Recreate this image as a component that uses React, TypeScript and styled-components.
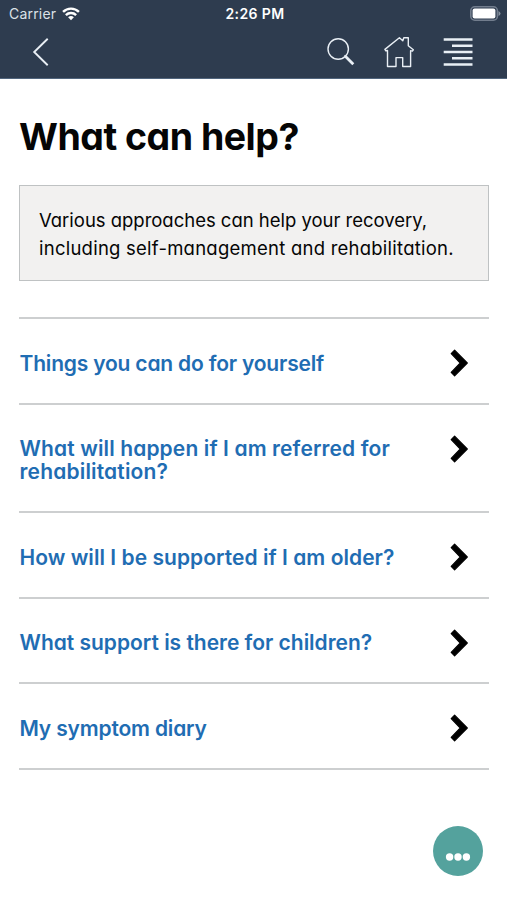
import React from "react";
import styled, { createGlobalStyle } from "styled-components";

const GlobalStyle = createGlobalStyle`
  * { box-sizing: border-box; }
  body { margin: 0; background: #fff; font-family: Inter, "Open Sans", sans-serif; }
  h1, p, ul { margin: 0; padding: 0; }
`;

const Screen = styled.div`
  display: flex;
  flex-direction: column;
  height: 900px;
  overflow: hidden;
  background: #fff;
  color: #050505;
  font-feature-settings: "cv11" 1;
`;

const Header = styled.header`
  height: 79px;
  flex: none;
  background: #2e3c4f;
  border-bottom: 1px solid #51657d;
  color: #fff;
`;

const StatusBar = styled.div`
  display: grid;
  grid-template-columns: 1fr auto 1fr;
  align-items: center;
  height: 27px;
  padding: 0 6px 0 9px;
  font-feature-settings: normal;
`;

const Carrier = styled.div`
  display: flex;
  align-items: center;
  gap: 6px;
  font-size: 14px;
  letter-spacing: 0.2px;
  color: #dbe1e7;
`;

const Clock = styled.div`
  font-size: 14px;
  font-weight: 600;
  letter-spacing: 0.4px;
`;

const BatterySlot = styled.div`
  display: flex;
  justify-content: flex-end;
`;

const NavBar = styled.nav`
  display: flex;
  align-items: center;
  justify-content: space-between;
  height: 50px;
  padding: 0 34px 0 32px;
`;

const NavActions = styled.div`
  display: flex;
  align-items: center;
  gap: 29px;
`;

const IconButton = styled.button`
  display: flex;
  padding: 0;
  border: 0;
  background: none;
  color: #e9eff5;
`;

const Main = styled.main`
  flex: 1;
  padding: 35px 18px 0 19px;
`;

const Title = styled.h1<{ $tracking: number }>`
  height: 71px;
  padding-top: 1px;
  font-size: 37.5px;
  line-height: 44px;
  font-weight: 700;
  white-space: nowrap;
  letter-spacing: ${(p) => p.$tracking}px;
`;

const Summary = styled.p`
  height: 96px;
  padding: 20px 18px 0 19px;
  border: 1px solid #bfc2c3;
  background: #f2f1f0;
  font-size: 18.5px;
  line-height: 28px;
`;

const Line = styled.span<{ $tracking: number }>`
  display: block;
  white-space: nowrap;
  letter-spacing: ${(p) => p.$tracking}px;
`;

const TopicList = styled.ul`
  margin-top: 36px;
  list-style: none;
  border-top: 2px solid #cdcfd0;
`;

const Topic = styled.li<{ $height: number }>`
  display: flex;
  justify-content: space-between;
  height: ${(p) => p.$height}px;
  padding: 30px 20.5px 0 0.5px;
  border-bottom: 2px solid #cdcfd0;
`;

const TopicLink = styled.a`
  padding-top: 2.5px;
  color: #1f6db3;
  font-size: 21px;
  font-weight: 600;
  line-height: 23px;
`;

const Fab = styled.button`
  position: absolute;
  left: 433px;
  top: 826px;
  display: flex;
  align-items: center;
  justify-content: center;
  width: 50px;
  height: 50px;
  padding: 11px 0 0;
  border: 0;
  border-radius: 50%;
  background: #54a29d;
`;

const topics = [
  { height: 85.6, lines: [{ text: "Things you can do for yourself", tracking: -0.19 }] },
  {
    height: 108.6,
    lines: [
      { text: "What will happen if I am referred for", tracking: 0.12 },
      { text: "rehabilitation?", tracking: 0.17 },
    ],
  },
  { height: 85.6, lines: [{ text: "How will I be supported if I am older?", tracking: 0.04 }] },
  { height: 85.6, lines: [{ text: "What support is there for children?", tracking: -0.02 }] },
  { height: 85.6, lines: [{ text: "My symptom diary", tracking: -0.17 }] },
];

const Wifi = () => (
  <svg width="18" height="14" viewBox="0 0 19 15" fill="none" stroke="#fff" strokeWidth="2.6">
    <path d="M1 5.2a12.2 12.2 0 0 1 17 0M4 8.6a7.9 7.9 0 0 1 11 0" />
    <path d="M6.4 11.1a4.5 4.5 0 0 1 6.2 0L9.5 14.2z" fill="#fff" stroke="none" />
  </svg>
);

const Battery = () => (
  <svg width="31" height="15" viewBox="0 0 31 15">
    <rect x=".8" y=".8" width="26.6" height="13.4" rx="4" fill="none" stroke="#727d8d" strokeWidth="1.6" />
    <rect x="2.6" y="2.6" width="22.8" height="9.8" rx="2" fill="#fff" />
    <path d="M28.5 5q2 1 2 2.5t-2 2.5z" fill="#8792a0" />
  </svg>
);

const Back = () => (
  <svg width="18" height="30" viewBox="0 0 18 30" fill="none" stroke="currentColor" strokeWidth="1.9">
    <path d="M15.7 1.7 2.2 15l13.5 13.3" />
  </svg>
);

const Search = () => (
  <svg width="28" height="28" viewBox="0 0 28 28" fill="none" stroke="currentColor">
    <circle cx="11.2" cy="11" r="10.2" strokeWidth="1.4" />
    <path d="m17.5 17.4 1.6 1.6" strokeWidth="1.6" />
    <path d="m18.6 18.5 7.7 7.7" strokeWidth="2.8" />
  </svg>
);

const Home = () => (
  <svg width="30" height="32" viewBox="0 0 30 32" fill="none" stroke="currentColor" strokeWidth="1.4" strokeLinejoin="round">
    <path d="M3.5 14.4 1.8 14.8.9 13.4 15.4 1.7l3.4 3 1-3h4.5v8l5 4.1-.9 1.3-1.8-.5v15.9h-7.9v-8.9h-6.7v8.9H3.5z" />
  </svg>
);

const Menu = () => (
  <svg width="30" height="30" viewBox="0 0 30 30" stroke="currentColor" strokeWidth="2.5">
    <path d="M.7 2.6h28.8M9 8.8h20.5M.7 15h28.8M9 21.2h20.5M.7 27.4h28.8" />
  </svg>
);

const Chevron = () => (
  <svg width="19" height="28" viewBox="0 0 19 28" fill="#000" stroke="#000" strokeWidth="1.2" strokeLinejoin="round">
    <path d="M4.6 1.2 17.3 14 4.6 26.8 1.2 23.4l9.1-9.4L1.2 4.6z" />
  </svg>
);

const Dots = () => (
  <svg width="26" height="8" viewBox="0 0 26 8" fill="#fff">
    <circle cx="4.6" cy="4" r="3.7" />
    <circle cx="13" cy="4" r="3.7" />
    <circle cx="21.4" cy="4" r="3.7" />
  </svg>
);

export default function App() {
  return (
    <Screen>
      <GlobalStyle />
      <Header>
        <StatusBar>
          <Carrier>
            Carrier <Wifi />
          </Carrier>
          <Clock>2:26 PM</Clock>
          <BatterySlot>
            <Battery />
          </BatterySlot>
        </StatusBar>
        <NavBar>
          <IconButton aria-label="Back"><Back /></IconButton>
          <NavActions>
            <IconButton aria-label="Search"><Search /></IconButton>
            <IconButton aria-label="Home"><Home /></IconButton>
            <IconButton aria-label="Menu"><Menu /></IconButton>
          </NavActions>
        </NavBar>
      </Header>
      <Main>
        <Title $tracking={-0.5}>What can help?</Title>
        <Summary>
          <Line $tracking={-0.02}>Various approaches can help your recovery,</Line>
          <Line $tracking={0.24}>including self-management and rehabilitation.</Line>
        </Summary>
        <TopicList>
          {topics.map((topic) => (
            <Topic key={topic.lines[0].text} $height={topic.height}>
              <TopicLink>
                {topic.lines.map((line) => (
                  <Line key={line.text} $tracking={line.tracking}>{line.text}</Line>
                ))}
              </TopicLink>
              <Chevron />
            </Topic>
          ))}
        </TopicList>
      </Main>
      <Fab aria-label="More options">
        <Dots />
      </Fab>
    </Screen>
  );
}
